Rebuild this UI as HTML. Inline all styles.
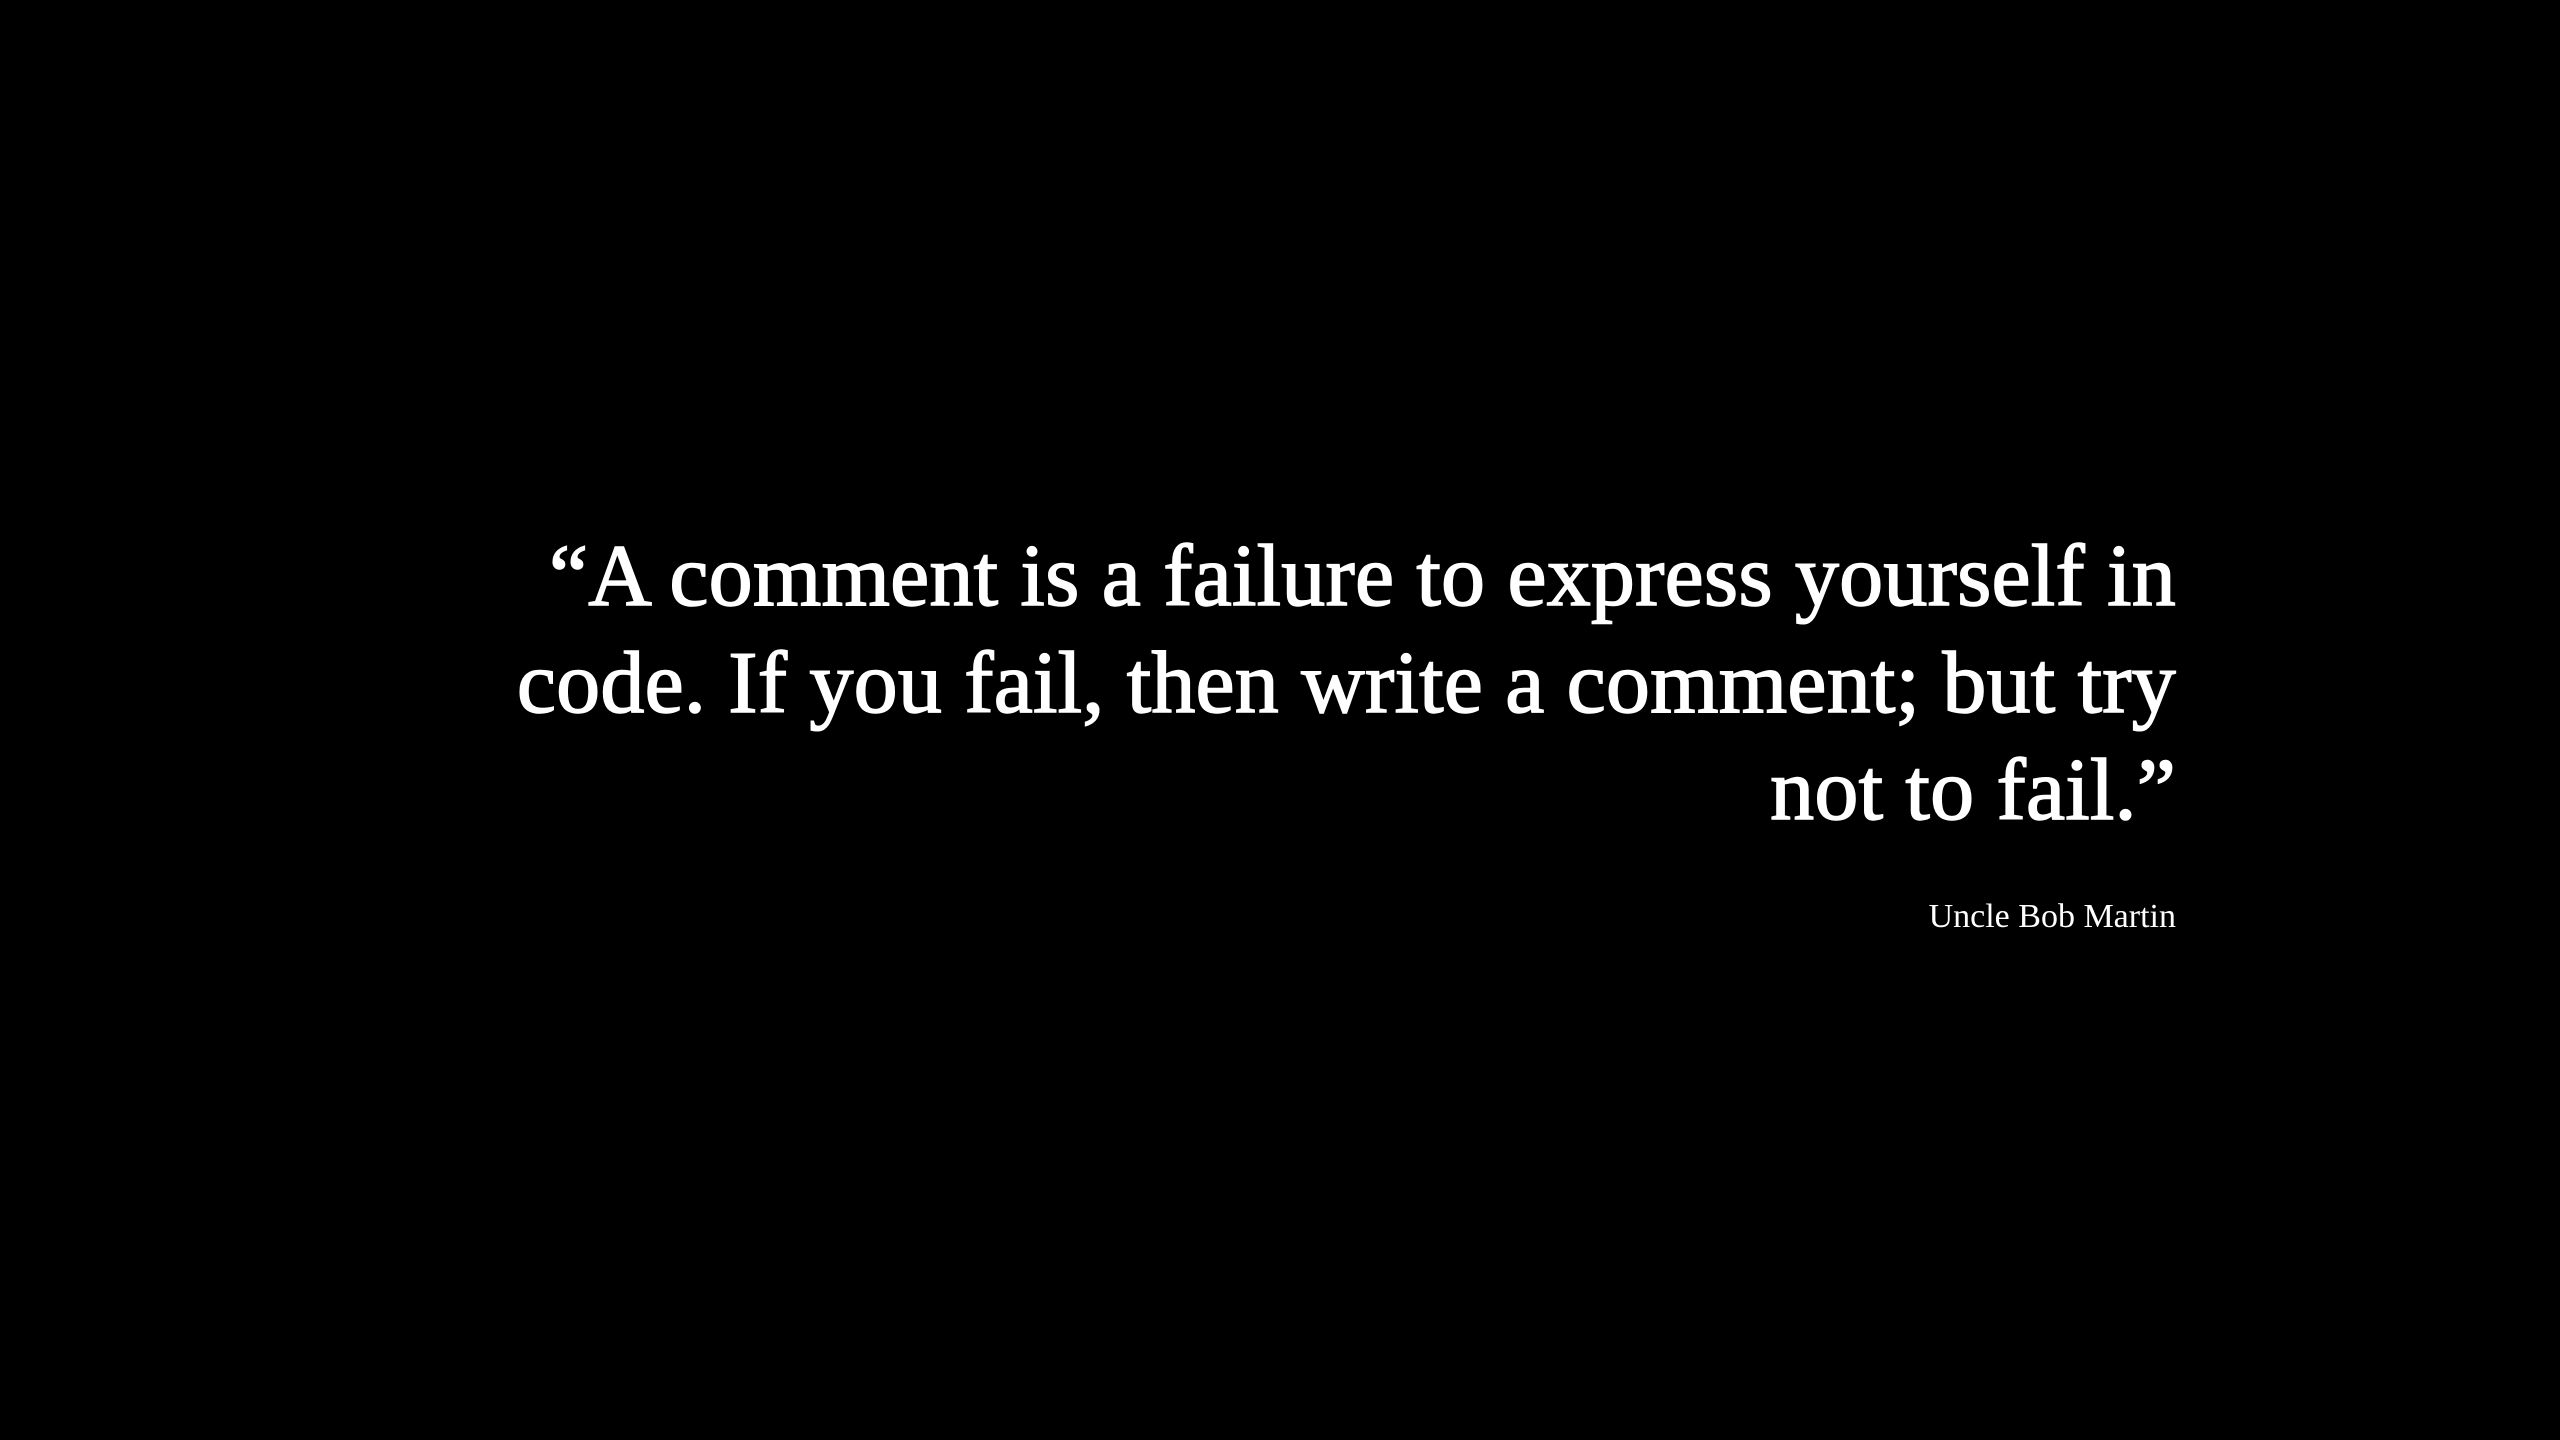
<!DOCTYPE html>
<html><head><meta charset="utf-8"><style>
html,body{margin:0;padding:0;background:#000;width:2560px;height:1440px;overflow:hidden}
.l{position:absolute;right:384px;color:#fff;font-family:"Liberation Serif",serif;font-size:88px;white-space:nowrap;line-height:1;letter-spacing:0.2px;-webkit-text-stroke:1.5px #fff}
.a{position:absolute;right:384px;top:900px;color:#fff;font-family:"Liberation Serif",serif;font-size:34px;white-space:nowrap;line-height:1}
</style></head><body>
<div class="l" style="top:533px">“A comment is a failure to express yourself in</div>
<div class="l" style="top:640px">code. If you fail, then write a comment; but try</div>
<div class="l" style="top:747px">not to fail.”</div>
<div class="a">Uncle Bob Martin</div>
</body></html>
